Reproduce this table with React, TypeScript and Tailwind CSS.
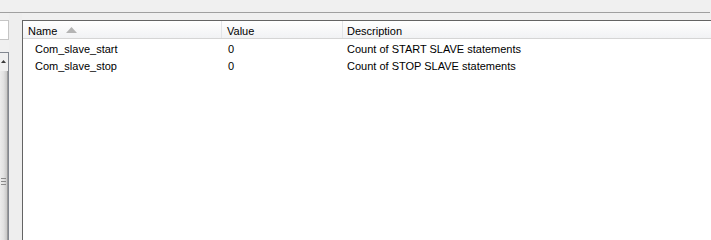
import React from 'react';

type Row = { name: string; value: string; description: string };

const rows: Row[] = [
  { name: 'Com_slave_start', value: '0', description: 'Count of START SLAVE statements' },
  { name: 'Com_slave_stop', value: '0', description: 'Count of STOP SLAVE statements' },
];

const SortArrow: React.FC = () => (
  <svg width="11" height="6" viewBox="0 0 11 6" className="ml-[9px] mt-[1px]">
    <path d="M5.5 0 L11 6 L0 6 Z" fill="#b4b4b4" />
  </svg>
);

const HeaderCell: React.FC<{ width?: string; children: React.ReactNode; last?: boolean }> = ({
  width,
  children,
  last,
}) => (
  <div
    className={`flex items-center h-full ${width ?? 'flex-1'} ${
      last ? '' : 'border-r border-[#e3e5e8]'
    }`}
  >
    {children}
  </div>
);

const App: React.FC = () => {
  return (
    <div
      className="w-[711px] h-[240px] overflow-hidden bg-[#f0f0f0] text-[11px] text-black flex flex-col"
      style={{ fontFamily: '"Liberation Sans", Arial, sans-serif' }}
    >
      {/* tab strip edge */}
      <div className="h-[12px] shrink-0" />
      <div className="h-px w-[710px] bg-[#a0a0a0] shrink-0" />

      <div className="flex flex-1 min-h-0">
        {/* left navigator, mostly scrolled off */}
        <div className="w-[9px] shrink-0 flex flex-col">
          <div className="mt-[7px] h-[20px] bg-white border-y border-r border-[#c5c5c5]" />
          <div className="mt-[12px] flex-1 flex flex-col border-t border-r border-[#828790]">
            <div className="h-[16px] flex items-center justify-center bg-[#f0f0f0]">
              <svg width="5" height="3" viewBox="0 0 5 3" className="mr-[1px]">
                <path d="M2.5 0 L5 3 L0 3 Z" fill="#3a3a3a" />
              </svg>
            </div>
            <div className="flex-1 mt-[2px] bg-gradient-to-r from-[#ececec] via-[#e2e2e2] to-[#c8c8c8] border-r border-[#9a9a9a] flex flex-col">
              <div className="h-[107px]" />
              <div className="flex flex-col gap-[2px] pl-[1px]">
                <div className="h-px w-[5px] bg-[#8a8a8a]" />
                <div className="h-px w-[5px] bg-[#8a8a8a]" />
                <div className="h-px w-[5px] bg-[#8a8a8a]" />
              </div>
            </div>
          </div>
        </div>

        {/* splitter */}
        <div className="w-[13px] shrink-0 bg-[#eeeeee]" />

        {/* status variables list */}
        <div className="mt-[7px] w-[689px] bg-white border-l border-t border-[#646464] flex flex-col">
          <div className="h-[18px] flex bg-gradient-to-b from-white to-[#f1f2f4] border-b border-[#d5d5d5]">
            <HeaderCell width="w-[199px]">
              <span className="pl-[5px] pt-[3px]">Name</span>
              <SortArrow />
            </HeaderCell>
            <HeaderCell width="w-[121px]">
              <span className="pl-[5px] pt-[3px]">Value</span>
            </HeaderCell>
            <HeaderCell last>
              <span className="pl-[4px] pt-[3px]">Description</span>
            </HeaderCell>
          </div>

          <div className="flex flex-col pt-[2px]">
            {rows.map((row) => (
              <div key={row.name} className="flex h-[17px] items-center">
                <div className="w-[199px] pl-[12px]">{row.name}</div>
                <div className="w-[121px] pl-[6px]">{row.value}</div>
                <div className="flex-1 pl-[4px]">{row.description}</div>
              </div>
            ))}
          </div>
        </div>
      </div>
    </div>
  );
};

export default App;
